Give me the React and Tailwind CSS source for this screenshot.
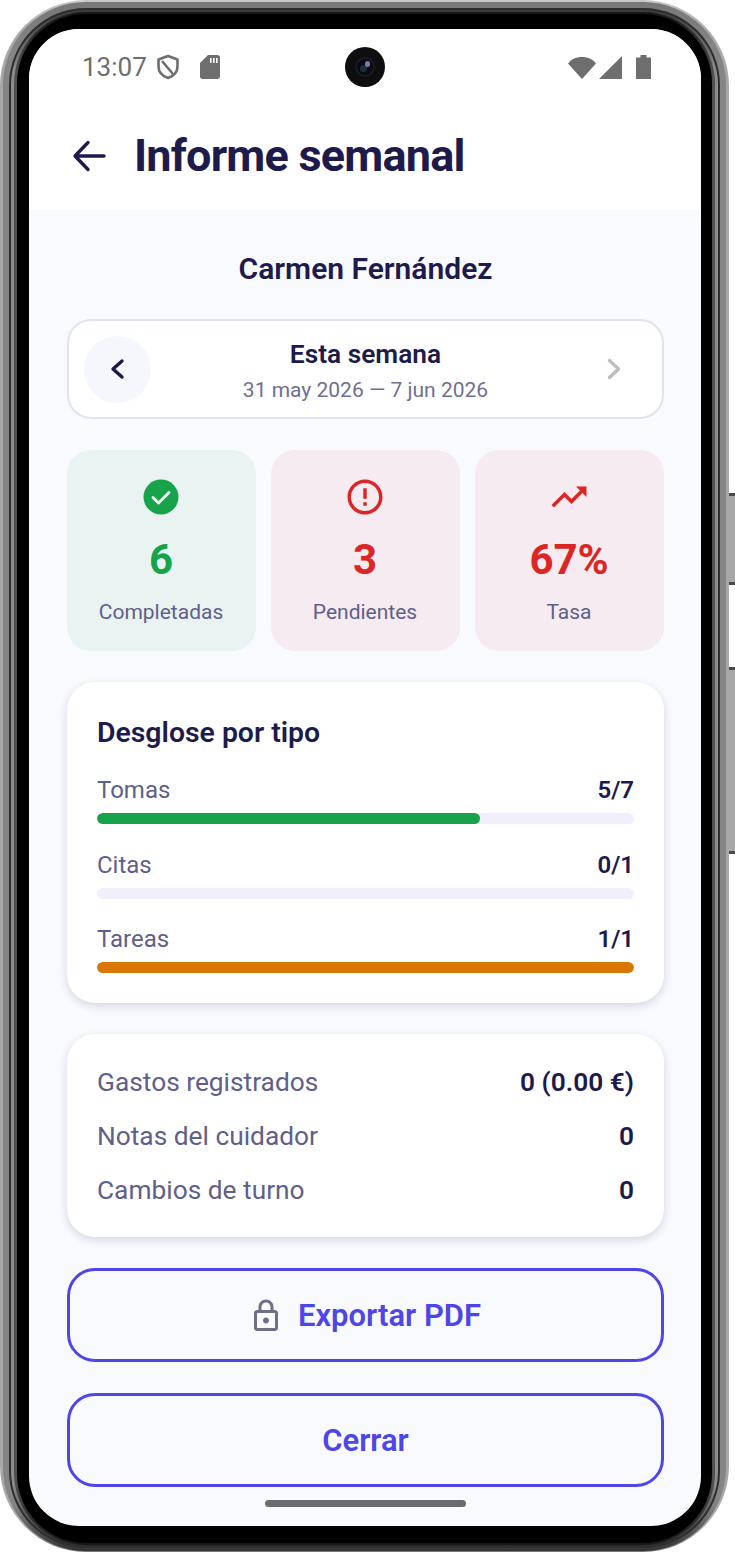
const StatCard = ({ bg, color, icon, value, label }) => (
  <div className={`flex-1 h-[201px] pr-[1px] rounded-[24px] flex flex-col items-center ${bg}`}>
    <div className="h-[42px] mt-[26px] flex items-center justify-center">{icon}</div>
    <div className={`mt-[18px] h-[47px] leading-[47px] text-[42px] font-bold ${color}`}>{value}</div>
    <div className="mt-[15px] text-[21px] leading-[28px] text-[#5f5f8a]">{label}</div>
  </div>
);

const BreakdownRow = ({ label, value, fill, width }) => (
  <div className="h-[74.5px]">
    <div className="flex justify-between items-center h-[32px] text-[24px]">
      <span className="text-[#5f5f8a]">{label}</span>
      <span className="font-semibold text-[#1e1b4b]">{value}</span>
    </div>
    <div className="mt-[7px] h-[11px] rounded-full bg-[#f0effb] overflow-hidden">
      <div className={`h-full rounded-full ${fill}`} style={{ width }} />
    </div>
  </div>
);

const InfoRow = ({ label, value }) => (
  <div className="flex justify-between items-center h-[54px] text-[26.3px]">
    <span className="text-[#5f5f8a]">{label}</span>
    <span className="font-semibold text-[#1e1b4b]">{value}</span>
  </div>
);

const StatusBar = () => (
  <div className="h-[76px] pl-[53px] pr-[50px] flex items-center justify-between relative">
    <div className="flex items-center text-[#6e6e6e]">
      <span className="text-[26px] leading-none">13:07</span>
      <svg className="ml-[9px]" width="24" height="26" viewBox="0 0 24 26" fill="none" stroke="#6e6e6e" strokeWidth="2.6">
        <path d="M12 2 L21.5 5.5 V12.5 C21.5 18 17.5 22 12 24 C6.5 22 2.5 18 2.5 12.5 V5.5 Z" strokeLinejoin="round" />
        <path d="M6 7 L17 20" />
      </svg>
      <svg className="ml-[20px]" width="20" height="24" viewBox="0 0 20 24" fill="#6e6e6e">
        <path fillRule="evenodd" d="M8 0 H17.5 C18.9 0 20 1.1 20 2.5 V21.5 C20 22.9 18.9 24 17.5 24 H2.5 C1.1 24 0 22.9 0 21.5 V8 Z M10 3 H11.6 V8 H10 Z M13 3 H14.6 V8 H13 Z M16 3 H17.6 V8 H16 Z" />
      </svg>
    </div>
    <div className="flex items-center">
      <svg width="28" height="23" viewBox="0 0 28 23" fill="#6e6e6e">
        <path d="M14 23 L0 7.5 C3.5 3 8.5 1 14 1 C19.5 1 24.5 3 28 7.5 Z" />
      </svg>
      <svg className="ml-[3px]" width="23" height="23" viewBox="0 0 23 23" fill="#6e6e6e">
        <path d="M23 0 V23 H0 Z" />
      </svg>
      <svg className="ml-[14px]" width="15" height="24" viewBox="0 0 15 24" fill="#6e6e6e">
        <path d="M4.5 0 H10.5 V2.5 H15 V24 H0 V2.5 H4.5 Z" />
      </svg>
    </div>
    {/* camera punch hole */}
    <div className="absolute left-[316px] top-[18px] w-[40px] h-[40px] rounded-full bg-[#0e0e10] flex items-center justify-center">
      <div className="relative w-[20px] h-[20px] rounded-full bg-[#0a0a14] border-[2px] border-[#1b1b20]">
        <div className="absolute left-[3px] top-[6px] w-[7px] h-[7px] rounded-full bg-[#1d3038]" />
        <div className="absolute left-[8px] top-[2px] w-[5px] h-[6px] rounded-full bg-[#7d78a8]" />
      </div>
    </div>
  </div>
);

export default function App() {
  return (
    <div className="relative w-[735px] h-[1553px] bg-white overflow-hidden font-['Roboto',sans-serif]">
      {/* side buttons */}
      <div className="absolute left-[729px] top-[493px] w-[6px] h-[92px] bg-[#a8a8a8] border-y-[3px] border-[#4a4a4a]" />
      <div className="absolute left-[729px] top-[667px] w-[6px] h-[187px] bg-[#a8a8a8] border-y-[3px] border-[#4a4a4a]" />

      {/* phone frame, sides are lighter than top and bottom */}
      <div className="w-[729px] h-[1552px] rounded-[86px] bg-[linear-gradient(to_bottom,#c8c8c8,#a8a8a8_2%,#a8a8a8_98%,#777777)] pt-[2px] pb-[1px] px-[3px]">
        <div className="w-full h-full rounded-[83px] bg-[linear-gradient(to_bottom,#777777,#858585_3%,#858585_97%,#333333)] pt-[6px] pb-[3px] px-[6px]">
          <div className="w-full h-full rounded-[77px] bg-[#2e2e2e] pt-[2px] pb-[2px] px-[2px]">
            <div className="w-full h-full rounded-[75px] bg-[linear-gradient(to_bottom,#3a3a3a,#8c8c8c_4%,#8c8c8c_96%,#2a2a2a)] pt-[2px] pb-[1px] px-[3px]">
              <div className="w-full h-full rounded-[72px] bg-[linear-gradient(to_bottom,#161616,#4f4f4f_4%,#4f4f4f_96%,#161616)] pt-[2px] pb-[2px] px-[3px]">
                <div className="w-full h-full rounded-[69px] bg-black pt-[15px] pb-[17px] pl-[12px] pr-[11px]">
                  <div className="w-[672px] h-[1497px] rounded-[50px] overflow-hidden bg-[#f8fafe] flex flex-col">
                    <div className="bg-white h-[181px]">
                      <StatusBar />
                      <div className="flex items-center h-[105px] pb-[4px]">
                        <svg className="ml-[42px]" width="38" height="40" viewBox="0 0 38 40" fill="none" stroke="#1e1b4b" strokeWidth="3.4" strokeLinecap="round" strokeLinejoin="round">
                          <path d="M33 20 H5 M17 6.5 L4 20 L17 33.5" />
                        </svg>
                        <h1 className="ml-[25px] text-[45px] leading-none font-bold tracking-[-0.8px] text-[#1e1b4b]">Informe semanal</h1>
                      </div>
                    </div>

                    <div className="flex-1 relative pl-[38px] pr-[37px]">
                      <div className="h-[109px] pt-[38px] text-center text-[30px] leading-[42px] font-semibold text-[#1e1b4b]">Carmen Fernández</div>

                      <div className="flex flex-col gap-[31px]">
                        <div className="h-[100px] rounded-[24px] bg-white border-2 border-[#e2e2f2] grid grid-cols-[67px_1fr_67px] items-center px-[15px]">
                          <div className="w-[67px] h-[67px] rounded-full bg-[#f6f7fc] flex items-center justify-center">
                            <svg width="20" height="24" viewBox="0 0 20 24" fill="none" stroke="#1e1b4b" strokeWidth="3.4" strokeLinecap="round" strokeLinejoin="round">
                              <path d="M14 4 L5 12 L14 20" />
                            </svg>
                          </div>
                          <div className="text-center pt-[4px]">
                            <div className="text-[26.3px] leading-[32px] font-semibold text-[#1e1b4b]">Esta semana</div>
                            <div className="mt-[6px] text-[21px] leading-[28px] text-[#6f6f94]">31 may 2026 — 7 jun 2026</div>
                          </div>
                          <div className="flex justify-center">
                            <svg width="20" height="24" viewBox="0 0 20 24" fill="none" stroke="#bdbdc4" strokeWidth="3.4" strokeLinecap="round" strokeLinejoin="round">
                              <path d="M5.5 3.5 L14.5 12 L5.5 20.5" />
                            </svg>
                          </div>
                        </div>

                        <div className="flex gap-[15px]">
                          <StatCard
                            bg="bg-[#e9f3f1]"
                            color="text-[#16a34a]"
                            value="6"
                            label="Completadas"
                            icon={
                              <svg width="36" height="36" viewBox="0 0 36 36">
                                <circle cx="18" cy="18" r="17.5" fill="#16a34a" />
                                <path d="M10 18.5 L15.5 24 L26 13.5" fill="none" stroke="#e9f3f1" strokeWidth="3" strokeLinecap="round" strokeLinejoin="round" />
                              </svg>
                            }
                          />
                          <StatCard
                            bg="bg-[#f5ebf0]"
                            color="text-[#dc2626]"
                            value="3"
                            label="Pendientes"
                            icon={
                              <svg width="42" height="42" viewBox="0 0 24 24" fill="#dc2626">
                                <path d="M11 15h2v2h-2zm0-8h2v6h-2zm.99-5C6.47 2 2 6.48 2 12s4.47 10 9.99 10C17.52 22 22 17.52 22 12S17.52 2 11.99 2zM12 20c-4.42 0-8-3.58-8-8s3.58-8 8-8 8 3.58 8 8-3.58 8-8 8z" />
                              </svg>
                            }
                          />
                          <StatCard
                            bg="bg-[#f5ebf0]"
                            color="text-[#dc2626]"
                            value="67%"
                            label="Tasa"
                            icon={
                              <svg width="42" height="42" viewBox="0 0 24 24" fill="#dc2626">
                                <path d="M16 6l2.29 2.29-4.88 4.88-4-4L2 16.59 3.41 18l6-6 4 4 6.3-6.29L22 12V6z" />
                              </svg>
                            }
                          />
                        </div>

                        <div className="h-[321px] rounded-[28px] bg-white px-[30px] pt-[30px] shadow-[0_3px_8px_rgba(30,27,75,0.16)]">
                          <div className="h-[40px] pt-[1px] text-[28.4px] leading-[40px] font-semibold text-[#1e1b4b]">Desglose por tipo</div>
                          <div className="mt-[22px]">
                            <BreakdownRow label="Tomas" value="5/7" fill="bg-[#16a34a]" width="71.4%" />
                            <BreakdownRow label="Citas" value="0/1" fill="bg-[#16a34a]" width="0%" />
                            <BreakdownRow label="Tareas" value="1/1" fill="bg-[#d97706]" width="100%" />
                          </div>
                        </div>

                        <div className="h-[203px] rounded-[28px] bg-white px-[30px] pt-[22px] shadow-[0_3px_8px_rgba(30,27,75,0.16)]">
                          <InfoRow label="Gastos registrados" value="0 (0.00 €)" />
                          <InfoRow label="Notas del cuidador" value="0" />
                          <InfoRow label="Cambios de turno" value="0" />
                        </div>

                        <button className="h-[94px] pt-[2px] pr-[2px] rounded-[28px] border-[3px] border-[#4f46e5] flex items-center justify-center text-[31px] font-semibold text-[#4f46e5]">
                          <svg className="mr-[14px]" width="36" height="36" viewBox="0 0 24 24" fill="#6f6f85">
                            <path d="M18 8h-1V6c0-2.76-2.24-5-5-5S7 3.24 7 6v2H6c-1.1 0-2 .9-2 2v10c0 1.1.9 2 2 2h12c1.1 0 2-.9 2-2V10c0-1.1-.9-2-2-2zM9 6c0-1.66 1.34-3 3-3s3 1.34 3 3v2H9V6zm9 14H6V10h12v10zm-6-3c1.1 0 2-.9 2-2s-.9-2-2-2-2 .9-2 2 .9 2 2 2z" />
                          </svg>
                          Exportar PDF
                        </button>
                        <button className="h-[94px] pt-[2px] rounded-[28px] border-[3px] border-[#4f46e5] text-[31px] font-semibold text-[#4f46e5]">Cerrar</button>
                      </div>

                      <div className="absolute left-[236px] top-[1290px] w-[201px] h-[7px] rounded-full bg-[#6b6b70]" />
                    </div>
                  </div>
                </div>
              </div>
            </div>
          </div>
        </div>
      </div>
    </div>
  );
}
